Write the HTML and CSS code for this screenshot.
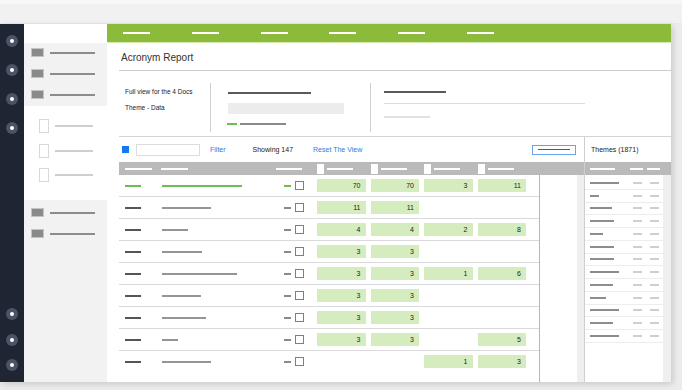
FILE: index.html
```html
<!DOCTYPE html>
<html lang="en">
<head>
  <meta charset="UTF-8" />
  <title>Acronym Report</title>
  <link rel="stylesheet" href="styles.css">
</head>
<body>
  <div class="topbar"></div>

  <div class="app">
    <!-- === RAIL === -->
    <aside class="rail">
      <div class="rail-group top">
        <span class="dot"></span><span class="dot"></span><span class="dot"></span><span class="dot"></span>
      </div>
      <div class="rail-group bottom">
        <span class="dot"></span><span class="dot"></span><span class="dot"></span>
      </div>
    </aside>

    <!-- === SIDE PANEL === -->
    <aside class="panel">
      <div class="panel-head"></div>
      <div class="panel-block shaded">
        <div class="p-item"><span class="sq"></span><span class="ln"></span></div>
        <div class="p-item"><span class="sq"></span><span class="ln"></span></div>
        <div class="p-item"><span class="sq"></span><span class="ln"></span></div>
      </div>
      <div class="panel-block docs">
        <div class="p-doc"><span class="doc"></span><span class="ln"></span></div>
        <div class="p-doc"><span class="doc"></span><span class="ln"></span></div>
        <div class="p-doc"><span class="doc"></span><span class="ln"></span></div>
      </div>
      <div class="panel-block shaded lower">
        <div class="p-item"><span class="sq"></span><span class="ln"></span></div>
        <div class="p-item"><span class="sq"></span><span class="ln"></span></div>
      </div>
    </aside>

    <!-- === MAIN === -->
    <main class="main">
      <div class="greenbar">
        <span></span><span></span><span></span><span></span><span></span><span></span>
      </div>

      <div class="content">
        <h1 class="title">Acronym Report</h1>

        <div class="info">
          <div class="info-block first">
            <p>Full view for the 4 Docs</p>
            <p>Theme - Data</p>
          </div>
          <div class="info-block second">
            <span class="bar dark w83"></span>
            <span class="field"></span>
            <div class="pair"><span class="bar green w10"></span><span class="bar mid w46"></span></div>
          </div>
          <div class="info-block third">
            <span class="bar dark w62"></span>
            <span class="bar thin w201"></span>
            <span class="bar faint w46"></span>
          </div>
        </div>

        <div class="report">
          <div class="table-area">
            <div class="toolbar">
              <span class="check-all"></span>
              <span class="search"></span>
              <a class="link filter" href="#">Filter</a>
              <span class="count">Showing 147</span>
              <a class="link reset" href="#">Reset The View</a>
              <span class="view-btn"><i></i></span>
            </div>

            <div class="thead">
              <span class="h-dash first"></span>
              <span class="h-dash second"></span>
              <span class="h-dash third"></span>
              <div class="h-cells">
                <div class="h-cell"><span class="h-box"></span><span class="h-line"></span></div>
                <div class="h-cell"><span class="h-box"></span><span class="h-line"></span></div>
                <div class="h-cell"><span class="h-box"></span><span class="h-line"></span></div>
                <div class="h-cell"><span class="h-box"></span><span class="h-line"></span></div>
              </div>
            </div>

            <div class="tbody">
              <div class="rows" id="rows"></div>
              <div class="gap"></div>
              <div class="strip"></div>
            </div>
          </div>

          <div class="themes">
            <div class="themes-title">Themes (1871)</div>
            <div class="themes-head">
              <span class="t-line"></span><span class="t-short"></span><span class="t-short"></span>
            </div>
            <div class="themes-body">
              <div class="themes-list" id="themes"></div>
              <div class="scroll"></div>
            </div>
          </div>
        </div>
      </div>
    </main>
  </div>

  <script>
    const rows = [
      { w: 80, on: true, v: ['70', '70', '3', '11'] },
      { w: 49, v: ['11', '11', '', ''] },
      { w: 26, v: ['4', '4', '2', '8'] },
      { w: 40, v: ['3', '3', '', ''] },
      { w: 75, v: ['3', '3', '1', '6'] },
      { w: 39, v: ['3', '3', '', ''] },
      { w: 44, v: ['3', '3', '', ''] },
      { w: 16, v: ['3', '3', '', '5'] },
      { w: 49, v: ['', '', '1', '3'] }
    ];

    const rowsEl = document.getElementById('rows');
    rows.forEach((r) => {
      const row = document.createElement('div');
      row.className = 'row' + (r.on ? ' on' : '');
      let html = '<span class="c1"></span>';
      html += '<span class="c2"><i style="width:' + r.w + 'px"></i></span>';
      html += '<span class="c3"><i></i><b></b></span>';
      r.v.forEach((n) => {
        html += n ? '<span class="num">' + n + '</span>' : '<span class="num empty"></span>';
      });
      row.innerHTML = html;
      rowsEl.appendChild(row);
    });

    const themes = [29, 9, 22, 24, 13, 24, 24, 29, 23, 16, 29, 23, 29];
    const themesEl = document.getElementById('themes');
    themes.forEach((w) => {
      const t = document.createElement('div');
      t.className = 't-row';
      t.innerHTML = '<span class="t-name" style="width:' + w + 'px"></span><span class="t-val"></span><span class="t-val"></span>';
      themesEl.appendChild(t);
    });
  </script>
</body>
</html>
```

FILE: styles.css
```css
:root {
  --rail: #1f2533;
  --green: #8cba3a;
  --cell: #d5ecbf;
  --head: #bababa;
  --line: #d9d9d9;
  --blue: #2a7de1;
}

body {
  margin: 0;
  background-color: #ececec;
  font-family: 'Liberation Sans', Arial, sans-serif;
  color: #222;
  width: 682px;
  height: 390px;
  overflow: hidden;
}

.topbar {
  height: 19px;
  background-color: #f1f1f1;
  border-top: 4px solid #f7f7f7;
  border-bottom: 1px solid #e9e9e9;
}

.app {
  display: flex;
  width: 671px;
  height: 358px;
  background-color: #fff;
  box-shadow: 2px 2px 6px rgba(0, 0, 0, 0.15);
}

/* === RAIL === */
.rail {
  width: 24px;
  background-color: var(--rail);
  display: flex;
  flex-direction: column;
  justify-content: space-between;
  align-items: center;
}

.rail-group {
  display: flex;
  flex-direction: column;
}

.rail-group.top {
  padding-top: 11px;
  gap: 17px;
}

.rail-group.bottom {
  padding-bottom: 11px;
  gap: 13.5px;
}

.dot {
  width: 12px;
  height: 12px;
  border-radius: 50%;
  background-color: #4c5366;
  display: flex;
  align-items: center;
  justify-content: center;
}

.dot::after {
  content: '';
  width: 4px;
  height: 4px;
  border-radius: 50%;
  background-color: #fff;
}

/* === SIDE PANEL === */
.panel {
  width: 83px;
  display: flex;
  flex-direction: column;
}

.panel-head {
  height: 19px;
}

.panel-block {
  display: flex;
  flex-direction: column;
}

.panel-block.shaded {
  background-color: #f2f2f2;
  height: 63px;
  padding: 5px 0 0 7px;
  gap: 12px;
  box-sizing: border-box;
}

.panel-block.lower {
  flex: 1;
  padding-top: 8px;
}

.p-item {
  display: flex;
  align-items: center;
  gap: 6px;
  height: 9px;
}

.p-item .sq {
  width: 11px;
  height: 7px;
  background-color: #8a8a8a;
  border: 1px solid #c4c4c4;
}

.p-item .ln {
  width: 45px;
  height: 2px;
  background-color: #8c8c8c;
}

.panel-block.docs {
  height: 94px;
  padding: 13px 0 0 15px;
  gap: 10.5px;
  box-sizing: border-box;
}

.p-doc {
  display: flex;
  align-items: center;
  gap: 6px;
}

.p-doc .doc {
  width: 8px;
  height: 12px;
  border: 1px solid #d8d8d8;
  background-color: #fff;
}

.p-doc .ln {
  width: 38px;
  height: 2px;
  background-color: #cfcfcf;
}

/* === MAIN === */
.main {
  flex: 1;
  display: flex;
  flex-direction: column;
}

.greenbar {
  height: 18px;
  background-color: var(--green);
  border-bottom: 1px solid #d5eab0;
  display: flex;
  align-items: center;
  padding-left: 16px;
  gap: 41.8px;
}

.greenbar span {
  width: 27px;
  height: 2px;
  background-color: #fff;
}

.content {
  flex: 1;
  padding-left: 12px;
  display: flex;
  flex-direction: column;
}

.title {
  margin: 0;
  height: 28px;
  padding: 4px 0 0 2px;
  box-sizing: border-box;
  line-height: 22px;
  font-size: 10px;
  font-weight: normal;
  color: #333;
  border-bottom: 1px solid #cdcdcd;
}

/* === INFO === */
.info {
  height: 66px;
  box-sizing: border-box;
  padding: 12px 0 4px;
  display: flex;
  border-bottom: 1px solid #d4d4d4;
}

.info-block {
  display: flex;
  flex-direction: column;
}

.info-block.first {
  width: 91px;
  padding-left: 6px;
  box-sizing: border-box;
}

.info-block.first p {
  margin: 5px 0 0;
  font-size: 6.5px;
  line-height: 8px;
  color: #222;
}

.info-block.first p + p {
  margin-top: 8px;
}

.info-block.second {
  width: 160px;
  border-left: 1px solid #cfcfcf;
  box-sizing: border-box;
  padding: 9px 0 0 17px;
}

.info-block.third {
  flex: 1;
  border-left: 1px solid #cfcfcf;
  padding: 8px 0 0 13px;
}

.bar {
  display: block;
  height: 2px;
}

.bar.dark { background-color: #5a5a5a; }
.bar.mid { background-color: #8a8a8a; }
.bar.green { background-color: #6cbd52; }
.bar.thin { height: 1px; background-color: #dcdcdc; margin-top: 10px; }
.bar.faint { background-color: #e2e2e2; margin-top: 12px; }

.w10 { width: 10px; }
.w46 { width: 46px; }
.w62 { width: 62px; }
.w83 { width: 83px; }
.w201 { width: 201px; }

.field {
  width: 116px;
  height: 11px;
  margin-top: 9px;
  background-color: #ececec;
}

.pair {
  display: flex;
  gap: 3px;
  margin: 9px 0 0 -1px;
}

/* === REPORT === */
.report {
  flex: 1;
  display: flex;
}

.table-area {
  width: 465px;
  display: flex;
  flex-direction: column;
}

.toolbar {
  height: 25px;
  display: flex;
  align-items: center;
  font-size: 7px;
}

.check-all {
  width: 7px;
  height: 7px;
  margin-left: 3px;
  background-color: #1479f0;
}

.search {
  width: 62px;
  height: 10px;
  margin-left: 7px;
  border: 1px solid #dcdcdc;
}

.link {
  color: var(--blue);
  text-decoration: none;
}

.filter { margin-left: 10px; }
.count { margin-left: 27px; color: #222; }
.reset { margin-left: 20px; }

.view-btn {
  margin-left: auto;
  margin-right: 8px;
  width: 42px;
  height: 8px;
  border: 1px solid #6aa3ea;
  display: flex;
  align-items: center;
  justify-content: center;
}

.view-btn i {
  width: 32px;
  height: 1px;
  background-color: #2f5fa8;
}

.thead {
  height: 13px;
  background-color: var(--head);
  display: flex;
  align-items: center;
}

.h-dash {
  height: 2px;
  width: 27px;
  background-color: #fff;
}

.h-dash.first { margin-left: 6px; }
.h-dash.second { margin-left: 9px; }
.h-dash.third { margin-left: 88px; width: 26px; }

.h-cells {
  display: flex;
  gap: 5px;
  margin-left: 15px;
}

.h-cell {
  width: 48.5px;
  display: flex;
  align-items: center;
  gap: 3px;
}

.h-box {
  width: 7px;
  height: 10px;
  background-color: #fff;
}

.h-line {
  width: 26px;
  height: 2px;
  background-color: #fff;
}

/* === ROWS === */
.tbody {
  flex: 1;
  display: flex;
}

.rows {
  width: 420px;
  border-right: 1px solid #b5b5b5;
}

.gap {
  width: 37px;
}

.strip {
  width: 7px;
  background-color: #efefef;
}

.row {
  height: 21px;
  display: flex;
  align-items: center;
  border-bottom: 1px solid var(--line);
}

.row:last-child {
  border-bottom: none;
}

.c1 {
  width: 16px;
  height: 2px;
  margin: 0 21px 0 6px;
  background-color: #555;
}

.c2 {
  width: 122px;
  display: flex;
}

.c2 i {
  height: 2px;
  background-color: #959595;
}

.c3 {
  width: 33px;
  display: flex;
  align-items: center;
  gap: 4px;
}

.c3 i {
  width: 7px;
  height: 2px;
  background-color: #8a8a8a;
}

.c3 b {
  width: 7px;
  height: 7px;
  border: 1px solid #7e7e7e;
  background-color: #fff;
}

.row.on .c1,
.row.on .c2 i,
.row.on .c3 i {
  background-color: #6dbd55;
}

.num {
  width: 48.5px;
  height: 13px;
  margin-right: 5px;
  box-sizing: border-box;
  padding-right: 5px;
  background-color: var(--cell);
  font-size: 7px;
  line-height: 13px;
  text-align: right;
  color: #222;
}

.num.empty {
  background: none;
}

/* === THEMES === */
.themes {
  flex: 1;
  border-left: 1px solid #cfcfcf;
  display: flex;
  flex-direction: column;
}

.themes-title {
  height: 25px;
  line-height: 25px;
  padding-left: 6px;
  font-size: 7px;
  color: #222;
}

.themes-head {
  height: 13px;
  background-color: var(--head);
  display: flex;
  align-items: center;
  padding-left: 5px;
}

.t-line {
  width: 25px;
  height: 2px;
  background-color: #fff;
  margin-right: 15px;
}

.t-short {
  width: 13px;
  height: 2px;
  background-color: #fff;
  margin-right: 4px;
}

.themes-body {
  flex: 1;
  display: flex;
}

.themes-list {
  flex: 1;
  padding-top: 2px;
}

.scroll {
  width: 8px;
  background-color: #efefef;
}

.t-row {
  height: 11.75px;
  border-bottom: 1px solid #ededed;
  display: flex;
  align-items: center;
  padding-left: 5px;
}

.t-name {
  height: 2px;
  background-color: #8d8d8d;
}

.t-val {
  width: 9px;
  height: 2px;
  background-color: #cfcfcf;
  margin-left: 8px;
}

.t-name + .t-val {
  margin-left: auto;
}

.t-val:last-child {
  margin-right: 4px;
}
```
